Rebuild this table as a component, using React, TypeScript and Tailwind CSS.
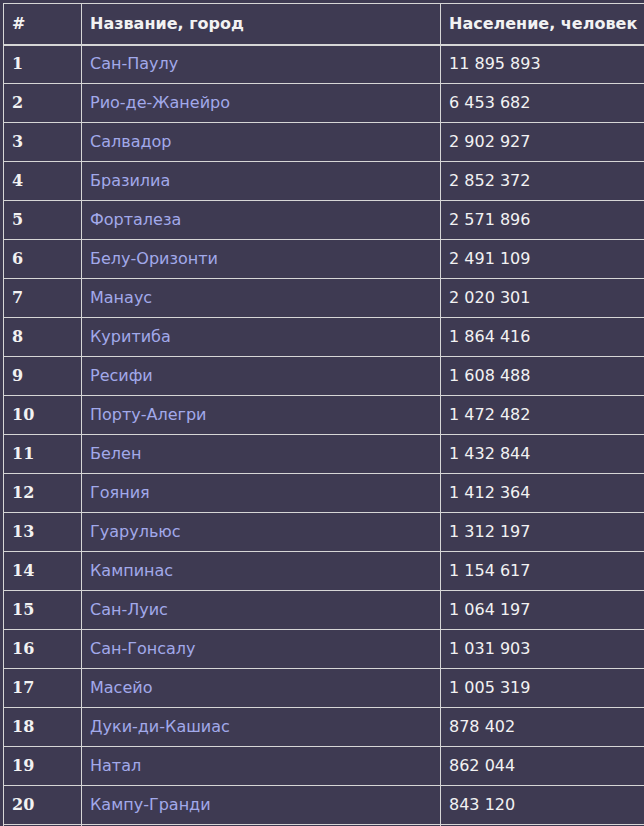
import React from "react";

const rows: [string, string][] = [
  ["Сан-Паулу", "11 895 893"],
  ["Рио-де-Жанейро", "6 453 682"],
  ["Салвадор", "2 902 927"],
  ["Бразилиа", "2 852 372"],
  ["Форталеза", "2 571 896"],
  ["Белу-Оризонти", "2 491 109"],
  ["Манаус", "2 020 301"],
  ["Куритиба", "1 864 416"],
  ["Ресифи", "1 608 488"],
  ["Порту-Алегри", "1 472 482"],
  ["Белен", "1 432 844"],
  ["Гояния", "1 412 364"],
  ["Гуарульюс", "1 312 197"],
  ["Кампинас", "1 154 617"],
  ["Сан-Луис", "1 064 197"],
  ["Сан-Гонсалу", "1 031 903"],
  ["Масейо", "1 005 319"],
  ["Дуки-ди-Кашиас", "878 402"],
  ["Натал", "862 044"],
  ["Кампу-Гранди", "843 120"],
];

export default function App() {
  return (
    <div className="w-[644px] h-[826px] overflow-hidden bg-[#3e3a52] pt-[3px] pl-[3px]">
      <table className="border-collapse w-[760px] table-fixed text-[16px] text-[#f2f2f2] font-['DejaVu_Sans',sans-serif]">
        <colgroup>
          <col className="w-[78px]" />
          <col className="w-[359px]" />
          <col className="w-[323px]" />
        </colgroup>
        <thead>
          <tr className="h-[41px]">
            <th className="border border-[#d6d6d6] border-b-2 px-2 text-left font-bold">#</th>
            <th className="border border-[#d6d6d6] border-b-2 px-2 text-left font-bold">Название, город</th>
            <th className="border border-[#d6d6d6] border-b-2 px-2 text-left font-bold">Население, человек</th>
          </tr>
        </thead>
        <tbody>
          {rows.map(([city, pop], i) => (
            <tr key={i} className="h-[39px]">
              <td className="border border-[#d6d6d6] px-2 font-bold font-['DejaVu_Serif',serif]">{i + 1}</td>
              <td className="border border-[#d6d6d6] px-2 text-[#a2a9ea]">{city}</td>
              <td className="border border-[#d6d6d6] px-2">{pop}</td>
            </tr>
          ))}
          <tr className="h-[39px]">
            <td className="border border-[#d6d6d6] px-2"></td>
            <td className="border border-[#d6d6d6] px-2"></td>
            <td className="border border-[#d6d6d6] px-2"></td>
          </tr>
        </tbody>
      </table>
    </div>
  );
}
